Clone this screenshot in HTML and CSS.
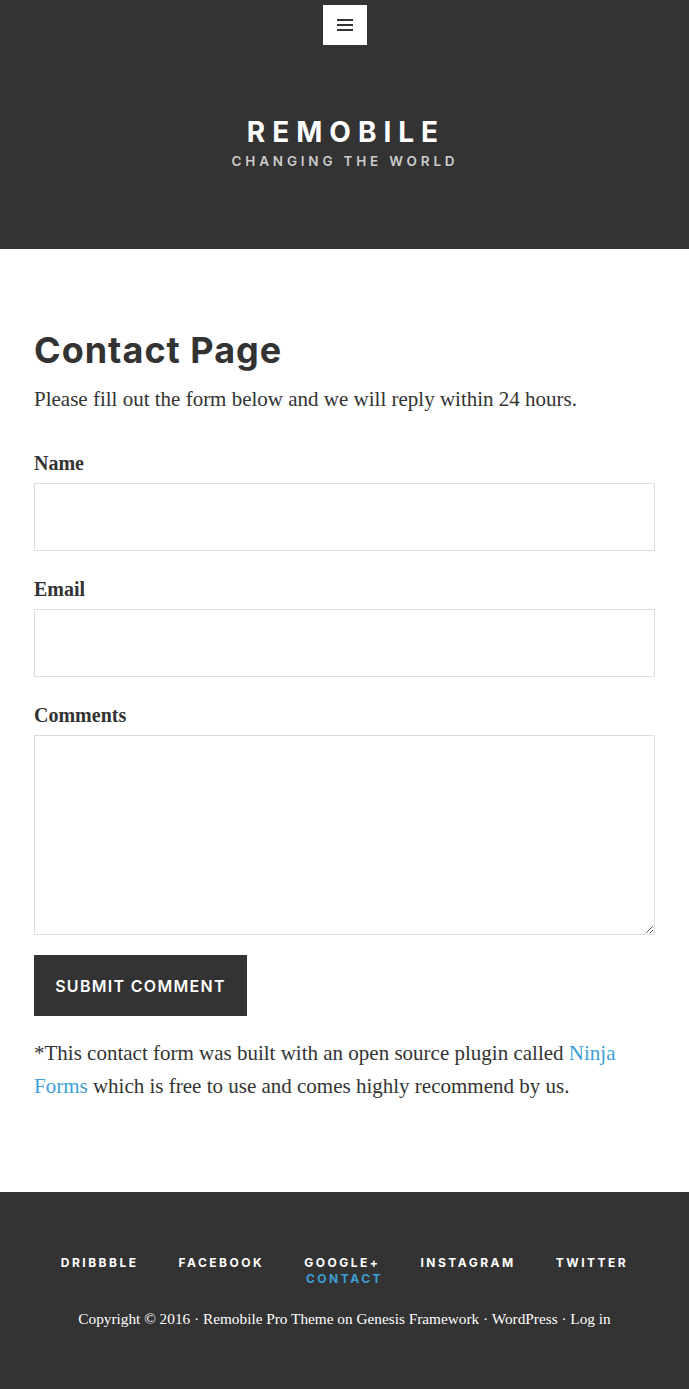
FILE: index.html
```html
<!DOCTYPE html>
<html lang="en">
<head>
    <meta charset="UTF-8">
    <meta name="viewport" content="width=device-width, initial-scale=1.0">
    <title>Contact Page - Remobile</title>
    <link rel="stylesheet" href="styles.css">
</head>
<body>
    <header class="site-header">
        <button class="menu-toggle" type="button" aria-label="Menu">
            <svg width="16" height="12" viewBox="0 0 16 12">
                <rect x="0" y="0" width="16" height="2" fill="#333"/>
                <rect x="0" y="5" width="16" height="2" fill="#333"/>
                <rect x="0" y="10" width="16" height="2" fill="#333"/>
            </svg>
        </button>
        <p class="site-title">Remobile</p>
        <p class="site-description">Changing the World</p>
    </header>

    <main class="content">
        <h1 class="entry-title">Contact Page</h1>
        <p class="intro">Please fill out the form below and we will reply within 24 hours.</p>

        <form class="contact-form">
            <label for="name">Name</label>
            <input type="text" id="name" name="name">

            <label for="email">Email</label>
            <input type="email" id="email" name="email">

            <label for="comments">Comments</label>
            <textarea id="comments" name="comments"></textarea>

            <input type="submit" value="Submit Comment">
        </form>

        <p class="note">*This contact form was built with an open source plugin called <a href="#">Ninja Forms</a> which is free to use and comes highly recommend by us.</p>
    </main>

    <footer class="site-footer">
        <nav class="footer-nav">
            <a href="#">Dribbble</a>
            <a href="#">Facebook</a>
            <a href="#">Google+</a>
            <a href="#">Instagram</a>
            <a href="#">Twitter</a>
            <a href="#" class="current">Contact</a>
        </nav>
        <p class="copyright">Copyright &copy; 2016 &middot; Remobile Pro Theme on Genesis Framework &middot; WordPress &middot; Log in</p>
    </footer>
</body>
</html>
```

FILE: styles.css
```css
body {
    margin: 0;
    padding: 0;
    font-family: "Liberation Serif", serif;
    color: #333;
    background: #fff;
}
a {
    color: #3d9fd6;
    text-decoration: none;
}
.site-header {
    background-color: #333;
    padding: 5px 0 78px;
    text-align: center;
}
.menu-toggle {
    display: flex;
    align-items: center;
    justify-content: center;
    width: 44px;
    height: 40px;
    margin: 0 auto;
    padding: 0;
    border: 0;
    background: #fff;
}
.site-title {
    margin: 69px 0 0 3px;
    font-family: Inter, sans-serif;
    font-size: 28px;
    font-weight: 700;
    line-height: 37px;
    letter-spacing: 7px;
    text-transform: uppercase;
    color: #fff;
}
.site-description {
    margin: 0 0 0 1px;
    font-family: Inter, sans-serif;
    font-size: 13.5px;
    font-weight: 600;
    line-height: 20px;
    letter-spacing: 3.8px;
    text-transform: uppercase;
    color: #ccc;
}
.content {
    padding: 81px 34px 89px;
}
.entry-title {
    margin: 0 0 12px;
    font-family: Inter, sans-serif;
    font-size: 36px;
    font-weight: 700;
    line-height: 41px;
    letter-spacing: 1px;
    color: #333;
}
.intro, .note {
    margin: 0;
    font-size: 21px;
    line-height: 33px;
}
.contact-form {
    display: flex;
    flex-direction: column;
    align-items: flex-start;
    padding-top: 35px;
}
.contact-form label {
    font-size: 20px;
    font-weight: 700;
    line-height: 24px;
    margin-bottom: 8px;
}
.contact-form input[type="text"],
.contact-form input[type="email"],
.contact-form textarea {
    box-sizing: border-box;
    width: 100%;
    height: 68px;
    margin: 0 0 26px;
    border: 1px solid #ddd;
    border-radius: 0;
    background: #fff;
    font: inherit;
}
.contact-form textarea {
    height: 200px;
    margin-bottom: 20px;
}
.contact-form input[type="submit"] {
    width: 213px;
    height: 61px;
    border: 0;
    border-radius: 0;
    background-color: #333;
    color: #fff;
    font-family: Inter, sans-serif;
    font-size: 16px;
    font-weight: 600;
    letter-spacing: 1.3px;
    text-transform: uppercase;
}
.note {
    margin-top: 21px;
}
.site-footer {
    background-color: #333;
    padding: 63px 34px 58px;
    text-align: center;
}
.footer-nav {
    display: flex;
    flex-wrap: wrap;
    justify-content: center;
    column-gap: 40px;
    font-family: Inter, sans-serif;
    font-size: 12px;
    font-weight: 700;
    line-height: 16px;
    letter-spacing: 2.5px;
    text-transform: uppercase;
}
.footer-nav a {
    color: #fff;
}
.footer-nav a.current {
    color: #3d9fd6;
}
.copyright {
    margin: 19px 0 0;
    font-size: 15.3px;
    line-height: 26px;
    color: #fff;
}
```
